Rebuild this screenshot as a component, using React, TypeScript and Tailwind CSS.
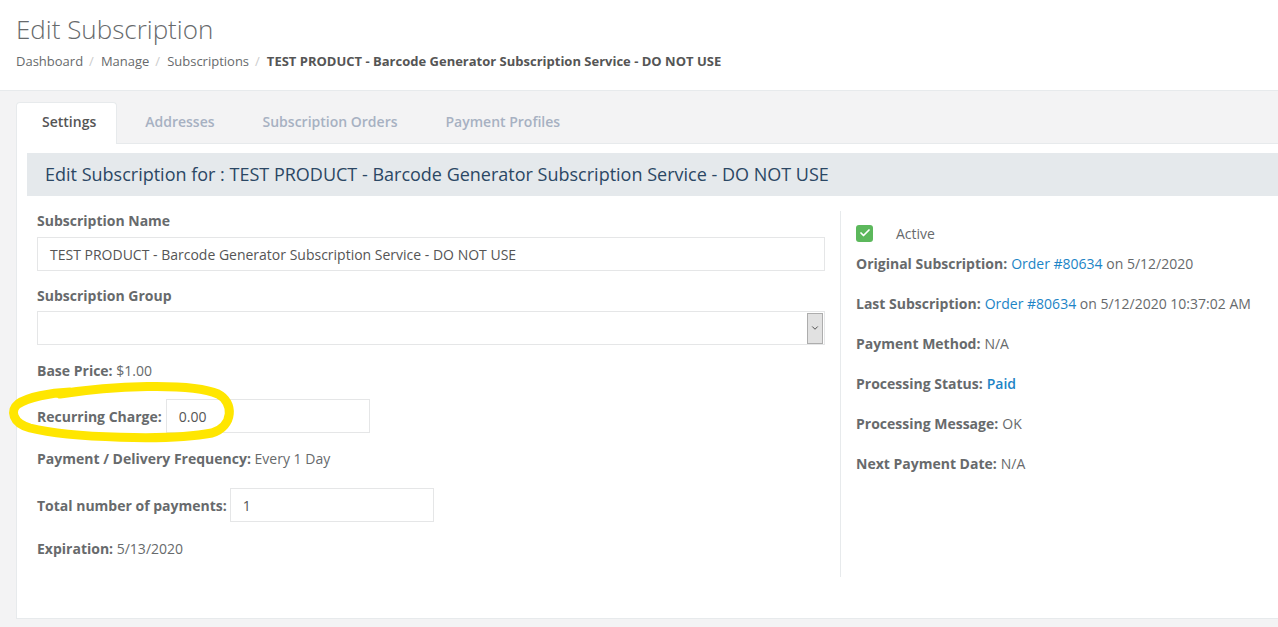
import { Check, ChevronDown } from "lucide-react";

const labelCls = "font-bold text-[#676a6c]";

function InfoRow({ label, children }: { label: string; children: React.ReactNode }) {
  return (
    <div className="h-[40px] flex items-center text-[14px] text-[#676a6c]">
      <span className={labelCls}>{label}</span>
      <span className="ml-[4px]">{children}</span>
    </div>
  );
}

export default function App() {
  const tabs = ["Addresses", "Subscription Orders", "Payment Profiles"];

  return (
    <div className="min-h-[627px] bg-[#f3f3f4] font-['Open_Sans',sans-serif] text-[#676a6c] overflow-hidden">
      {/* Page heading */}
      <div className="bg-white border-b border-[#e7eaec] h-[91px] pl-[16px] pt-[11px]">
        <h1 className="text-[26px] font-light leading-[36px] text-[#676a6c]">Edit Subscription</h1>
        <div className="mt-[5px] flex items-center text-[13px] leading-[18px]">
          <span>Dashboard</span>
          <span className="pl-[6px] pr-[7px] text-[#ccc]">/</span>
          <span>Manage</span>
          <span className="pl-[6px] pr-[7px] text-[#ccc]">/</span>
          <span>Subscriptions</span>
          <span className="pl-[6px] pr-[7px] text-[#ccc]">/</span>
          <span className="font-bold text-[#555]">
            TEST PRODUCT - Barcode Generator Subscription Service - DO NOT USE
          </span>
        </div>
      </div>

      {/* Tabs */}
      <div className="pl-[16px] pt-[10px]">
        <div className="flex items-end h-[42px]">
          <div className="h-[42px] bg-white rounded-t-[4px] border border-b-0 border-[#e7eaec] pl-[25px] pr-[20px] pb-[5px] flex items-center text-[14px] font-semibold text-[#555] -mb-px relative z-10">
            Settings
          </div>
          {tabs.map((t) => (
            <div
              key={t}
              className="h-[42px] ml-[3px] pl-[25px] pr-[20px] pb-[2px] flex items-center text-[14px] font-semibold text-[#a7b1c2]"
            >
              {t}
            </div>
          ))}
        </div>

        {/* Panel */}
        <div className="bg-white border-t border-l border-b border-[#e7eaec] h-[476px] pt-[9px] pl-[10px] relative">
          <div className="h-[43px] bg-[#e5e9ec] flex items-center pl-[18px] text-[18px] text-[#2b4764]">
            Edit Subscription for : TEST PRODUCT - Barcode Generator Subscription Service - DO NOT USE
          </div>

          <div className="flex pl-[10px] pt-[15px]">
            {/* Left column */}
            <div className="w-[788px] text-[14px]">
              <div className={`${labelCls} leading-[20px]`}>Subscription Name</div>
              <div className="mt-[6px] h-[34px] border border-[#e5e6e7] flex items-center pl-[12px] text-[#555]">
                TEST PRODUCT - Barcode Generator Subscription Service - DO NOT USE
              </div>

              <div className={`${labelCls} leading-[20px] mt-[15px]`}>Subscription Group</div>
              <div className="mt-[5px] h-[34px] border border-[#e5e6e7] flex items-center justify-end pr-[1px]">
                <div className="w-[16px] h-[31px] bg-[#e1e1e1] border border-[#adadad] flex items-center justify-center">
                  <ChevronDown className="w-[10px] h-[10px] text-[#333]" strokeWidth={2} />
                </div>
              </div>

              <div className="mt-[16px] leading-[20px]">
                <span className={labelCls}>Base Price:</span> $1.00
              </div>

              <div className="mt-[18px] flex items-center">
                <span className={labelCls}>Recurring Charge:</span>
                <div className="ml-[4px] w-[204px] h-[34px] border border-[#e5e6e7] flex items-center pl-[12px] text-[#555]">
                  0.00
                </div>
              </div>

              <div className="mt-[16px] leading-[20px]">
                <span className={labelCls}>Payment / Delivery Frequency:</span> Every 1 Day
              </div>

              <div className="mt-[19px] flex items-center">
                <span className={labelCls}>Total number of payments:</span>
                <div className="ml-[3px] w-[204px] h-[34px] border border-[#e5e6e7] flex items-center pl-[12px] text-[#555]">
                  1
                </div>
              </div>

              <div className="mt-[17px] leading-[20px]">
                <span className={labelCls}>Expiration:</span> 5/13/2020
              </div>
            </div>

            {/* Divider */}
            <div className="ml-[15px] w-px h-[366px] bg-[#e7eaec]" />

            {/* Right column */}
            <div className="pl-[15px] flex-1">
              <div className="flex items-center h-[44px]">
                <div className="w-[17px] h-[17px] rounded-[3px] bg-[#5cb85c] flex items-center justify-center">
                  <Check className="w-[12px] h-[12px] text-white" strokeWidth={3.5} />
                </div>
                <span className="ml-[23px] text-[14px]">Active</span>
              </div>
              <div className="-mt-[12px]">
                <InfoRow label="Original Subscription:">
                  <span className="text-[#1c84c6]">Order #80634</span> on 5/12/2020
                </InfoRow>
                <InfoRow label="Last Subscription:">
                  <span className="text-[#1c84c6]">Order #80634</span> on 5/12/2020 10:37:02 AM
                </InfoRow>
                <InfoRow label="Payment Method:">N/A</InfoRow>
                <InfoRow label="Processing Status:">
                  <span className="text-[#1c84c6] font-semibold">Paid</span>
                </InfoRow>
                <InfoRow label="Processing Message:">OK</InfoRow>
                <InfoRow label="Next Payment Date:">N/A</InfoRow>
              </div>
            </div>
          </div>
        </div>
      </div>

      {/* Yellow hand-drawn highlight */}
      <svg className="absolute left-0 top-0 pointer-events-none" width="260" height="460" viewBox="0 0 260 460">
        <path
          d="M 60 394 C 110 386, 190 382, 218 394 C 234 402, 234 426, 212 433 C 170 441, 70 438, 30 428 C 12 423, 10 410, 18 404 C 28 397, 50 393, 70 392"
          fill="none"
          stroke="#ffe600"
          strokeWidth="9"
          strokeLinecap="round"
          strokeLinejoin="round"
        />
      </svg>
    </div>
  );
}
